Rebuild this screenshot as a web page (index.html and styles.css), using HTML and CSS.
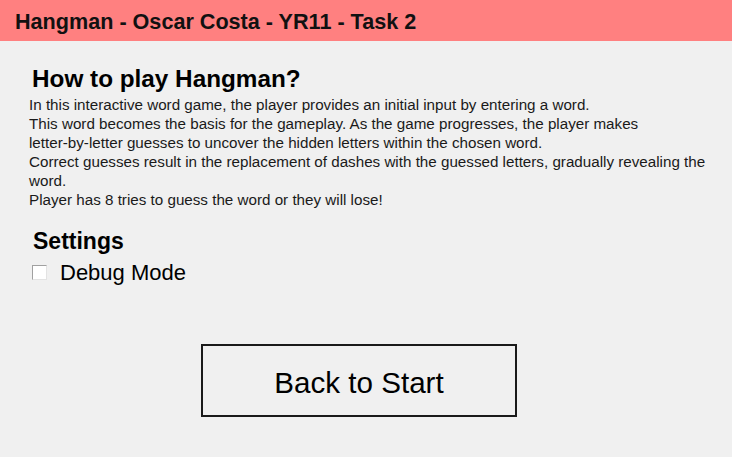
FILE: index.html
```html
<!DOCTYPE html>
<html lang="en">
<head>
  <meta charset="UTF-8">
  <meta name="viewport" content="width=device-width, initial-scale=1.0">
  <title>Hangman - Oscar Costa - YR11 - Task 2</title>
  <link rel="stylesheet" href="styles.css">
</head>
<body>
<div id="titlebar">Hangman - Oscar Costa - YR11 - Task 2</div>

<div id="content">
  <h1>How to play Hangman?</h1>
  <p class="rules">
    In this interactive word game, the player provides an initial input by entering a word.<br>
    This word becomes the basis for the gameplay. As the game progresses, the player makes<br>
    letter-by-letter guesses to uncover the hidden letters within the chosen word.<br>
    Correct guesses result in the replacement of dashes with the guessed letters, gradually revealing the<br>
    word.<br>
    Player has 8 tries to guess the word or they will lose!
  </p>

  <h2>Settings</h2>
  <label class="check" for="debug">
    <input type="checkbox" id="debug">
    <span class="box"></span>
    Debug Mode
  </label>

  <div class="actions">
    <button onclick="location.reload()">Back to Start</button>
  </div>
</div>
</body>
</html>
```

FILE: styles.css
```css
html, body {
  margin: 0;
  padding: 0;
  background-color: #f0f0f0;
  font-family: "Liberation Sans", Arial, sans-serif;
  color: #000;
}

#titlebar {
  height: 41px;
  background-color: #ff8080;
  display: flex;
  align-items: center;
  padding-left: 15px;
  padding-top: 2px;
  box-sizing: border-box;
  font-size: 21.6px;
  font-weight: bold;
  color: #111;
}

#content {
  padding-left: 29px;
}

h1 {
  margin: 24px 0 0 3px;
  font-size: 24.3px;
  line-height: 28px;
  font-weight: bold;
}

.rules {
  margin: 2px 0 0 0;
  font-size: 15.2px;
  line-height: 19px;
  color: #1a1a1a;
}

h2 {
  margin: 19px 0 0 4px;
  font-size: 23px;
  line-height: 26px;
  font-weight: bold;
}

.check {
  margin: 6px 0 0 3px;
  display: flex;
  align-items: center;
  font-size: 22px;
  line-height: 26px;
}

.check input {
  display: none;
}

.box {
  width: 13px;
  height: 13px;
  background-color: #fff;
  border: 1px solid #a0a0a0;
  border-right-color: #e3e3e3;
  border-bottom-color: #e3e3e3;
  margin-right: 13px;
  margin-top: -2px;
}

.actions {
  margin-top: 58px;
  padding-left: 172px;
}

button {
  width: 316px;
  height: 73px;
  background-color: #f0f0f0;
  border: 2px solid #1a1a1a;
  font-family: "Liberation Sans", Arial, sans-serif;
  font-size: 29.6px;
  color: #000;
  cursor: pointer;
  padding: 4px 0 0 0;
}
```
